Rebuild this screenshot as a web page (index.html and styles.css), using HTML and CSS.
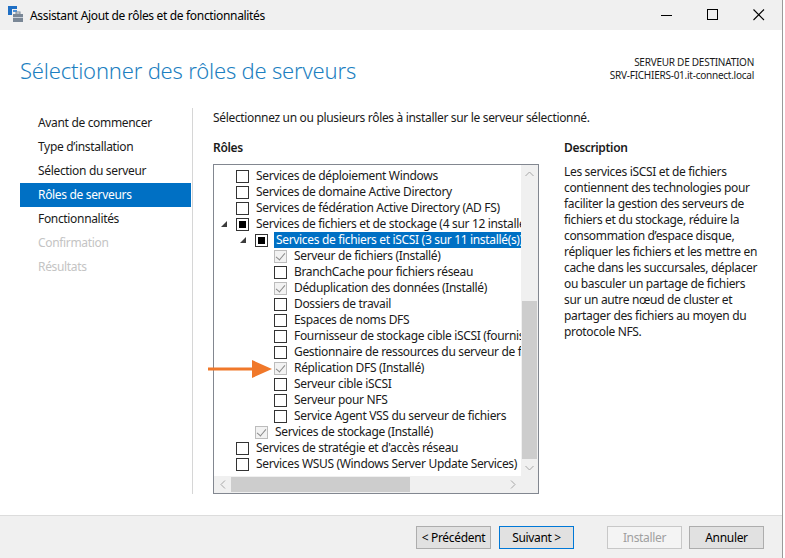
FILE: index.html
```html
<!DOCTYPE html>
<html lang="fr">
<head>
  <meta charset="UTF-8" />
  <title>Assistant Ajout de rôles et de fonctionnalités</title>
  <link rel="stylesheet" href="styles.css">
</head>
<body>
  <div class="window">

    <!-- Title bar -->
    <div class="titlebar">
      <svg class="app-icon" width="16" height="16" viewBox="0 0 16 16">
        <rect x="0" y="0" width="4" height="9" fill="#1f6fc4"/>
        <rect x="0" y="0" width="9" height="3" fill="#1f6fc4"/>
        <rect x="5" y="4" width="4" height="2" fill="#4a90d9"/>
        <rect x="5" y="8" width="10" height="8" fill="#7a8796"/>
        <rect x="8" y="6" width="4" height="2" fill="none" stroke="#7a8796" stroke-width="1"/>
        <rect x="5" y="11" width="10" height="1" fill="#c9d1da"/>
      </svg>
      <span class="title">Assistant Ajout de rôles et de fonctionnalités</span>
      <div class="controls">
        <span class="ctl"><svg width="12" height="12" viewBox="0 0 12 12"><line x1="0" y1="6.5" x2="11" y2="6.5" stroke="#000" stroke-width="1"/></svg></span>
        <span class="ctl"><svg width="12" height="12" viewBox="0 0 12 12"><rect x="0.5" y="0.5" width="10" height="10" fill="none" stroke="#000" stroke-width="1"/></svg></span>
        <span class="ctl"><svg width="12" height="12" viewBox="0 0 12 12"><path d="M0.5 0.5 L11 11 M11 0.5 L0.5 11" stroke="#000" stroke-width="1.1"/></svg></span>
      </div>
    </div>

    <!-- Header -->
    <div class="header">
      <h1>Sélectionner des rôles de serveurs</h1>
      <div class="dest">
        <div>SERVEUR DE DESTINATION</div>
        <div>SRV-FICHIERS-01.it-connect.local</div>
      </div>
    </div>

    <!-- Content -->
    <div class="content">
      <nav class="steps">
        <div class="step">Avant de commencer</div>
        <div class="step">Type d’installation</div>
        <div class="step">Sélection du serveur</div>
        <div class="step active">Rôles de serveurs</div>
        <div class="step">Fonctionnalités</div>
        <div class="step off">Confirmation</div>
        <div class="step off">Résultats</div>
      </nav>

      <main class="page">
        <p class="intro">Sélectionnez un ou plusieurs rôles à installer sur le serveur sélectionné.</p>
        <div class="columns">
          <section class="roles">
            <h2>Rôles</h2>
            <div class="tree">
              <div class="tree-rows">
                <div class="row"><span class="exp"></span><span class="box"></span><span class="label">Services de déploiement Windows</span></div>
                <div class="row"><span class="exp"></span><span class="box"></span><span class="label">Services de domaine Active Directory</span></div>
                <div class="row"><span class="exp"></span><span class="box"></span><span class="label">Services de fédération Active Directory (AD FS)</span></div>
                <div class="row"><span class="exp open"></span><span class="box partial"></span><span class="label">Services de fichiers et de stockage (4 sur 12 installé(s))</span></div>
                <div class="row lv1"><span class="exp open"></span><span class="box partial"></span><span class="label selected">Services de fichiers et iSCSI (3 sur 11 installé(s))</span></div>
                <div class="row lv2"><span class="exp"></span><span class="box done"></span><span class="label">Serveur de fichiers (Installé)</span></div>
                <div class="row lv2"><span class="exp"></span><span class="box"></span><span class="label">BranchCache pour fichiers réseau</span></div>
                <div class="row lv2"><span class="exp"></span><span class="box done"></span><span class="label">Déduplication des données (Installé)</span></div>
                <div class="row lv2"><span class="exp"></span><span class="box"></span><span class="label">Dossiers de travail</span></div>
                <div class="row lv2"><span class="exp"></span><span class="box"></span><span class="label">Espaces de noms DFS</span></div>
                <div class="row lv2"><span class="exp"></span><span class="box"></span><span class="label">Fournisseur de stockage cible iSCSI (fournisseurs de matériel VDS et VSS)</span></div>
                <div class="row lv2"><span class="exp"></span><span class="box"></span><span class="label">Gestionnaire de ressources du serveur de fichiers</span></div>
                <div class="row lv2"><span class="exp"></span><span class="box done"></span><span class="label">Réplication DFS (Installé)</span></div>
                <div class="row lv2"><span class="exp"></span><span class="box"></span><span class="label">Serveur cible iSCSI</span></div>
                <div class="row lv2"><span class="exp"></span><span class="box"></span><span class="label">Serveur pour NFS</span></div>
                <div class="row lv2"><span class="exp"></span><span class="box"></span><span class="label">Service Agent VSS du serveur de fichiers</span></div>
                <div class="row lv1"><span class="exp"></span><span class="box done"></span><span class="label">Services de stockage (Installé)</span></div>
                <div class="row"><span class="exp"></span><span class="box"></span><span class="label">Services de stratégie et d'accès réseau</span></div>
                <div class="row"><span class="exp"></span><span class="box"></span><span class="label">Services WSUS (Windows Server Update Services)</span></div>
              </div>

              <div class="vscroll">
                <span class="arrow"><svg width="9" height="6" viewBox="0 0 9 6"><path d="M0.5 5 L4.5 1 L8.5 5" fill="none" stroke="#a6a6a6" stroke-width="1"/></svg></span>
                <span class="spacer"></span>
                <span class="thumb"></span>
                <span class="arrow"><svg width="9" height="6" viewBox="0 0 9 6"><path d="M0.5 1 L4.5 5 L8.5 1" fill="none" stroke="#a6a6a6" stroke-width="1"/></svg></span>
              </div>

              <div class="hscroll">
                <span class="arrow"><svg width="6" height="9" viewBox="0 0 6 9"><path d="M5 0.5 L1 4.5 L5 8.5" fill="none" stroke="#a6a6a6" stroke-width="1"/></svg></span>
                <span class="thumb"></span>
                <span class="spacer"></span>
                <span class="arrow"><svg width="6" height="9" viewBox="0 0 6 9"><path d="M1 0.5 L5 4.5 L1 8.5" fill="none" stroke="#a6a6a6" stroke-width="1"/></svg></span>
              </div>
              <div class="corner"></div>
            </div>

            <!-- Orange pointer -->
            <svg class="pointer" width="66" height="20" viewBox="0 0 66 20">
              <line x1="0" y1="10" x2="48" y2="10" stroke="#f0782a" stroke-width="3"/>
              <polygon points="44,1 64,10 44,19" fill="#f0782a"/>
            </svg>
          </section>

          <section class="desc">
            <h2>Description</h2>
            <p>Les services iSCSI et de fichiers<br>
              contiennent des technologies pour<br>
              faciliter la gestion des serveurs de<br>
              fichiers et du stockage, réduire la<br>
              consommation d’espace disque,<br>
              répliquer les fichiers et les mettre en<br>
              cache dans les succursales, déplacer<br>
              ou basculer un partage de fichiers<br>
              sur un autre nœud de cluster et<br>
              partager des fichiers au moyen du<br>
              protocole NFS.</p>
          </section>
        </div>
      </main>
    </div>

    <!-- Footer buttons -->
    <div class="footer">
      <button class="btn">&lt; Précédent</button>
      <button class="btn default">Suivant &gt;</button>
      <button class="btn disabled">Installer</button>
      <button class="btn">Annuler</button>
    </div>
  </div>
</body>
</html>
```

FILE: styles.css
```css
* {
  box-sizing: border-box;
}

body {
  margin: 0;
  background: #fff;
  font-family: "Segoe UI", "Noto Sans", sans-serif;
  font-size: 12px;
  letter-spacing: -0.33px;
  color: #1a1a1a;
}

.window {
  width: 783px;
  height: 558px;
  border-right: 1px solid #9a9a9a;
  display: flex;
  flex-direction: column;
  background: #fff;
}

/* Title bar */
.titlebar {
  height: 30px;
  background: #f0f0f0;
  display: flex;
  align-items: center;
  padding-left: 8px;
}

.app-icon {
  margin-top: -2px;
}

.title {
  margin-left: 6px;
  color: #000;
}

.controls {
  margin-left: auto;
  display: flex;
}

.ctl {
  width: 46px;
  height: 30px;
  display: flex;
  align-items: center;
  justify-content: center;
}

/* Header */
.header {
  height: 78px;
  display: flex;
  justify-content: space-between;
  padding: 0 28px 0 20px;
}

.header h1 {
  margin: 25px 0 0;
  font-weight: 300;
  font-size: 22px;
  letter-spacing: -0.2px;
  color: #1d7fc1;
}

.dest {
  margin-top: 26px;
  text-align: right;
  font-size: 10px;
  letter-spacing: -0.25px;
  line-height: 13px;
  color: #1a1a1a;
}

/* Content */
.content {
  flex: 1;
  display: flex;
  padding-bottom: 21px;
}

.steps {
  width: 193px;
  padding: 3px 1px 0 20px;
  border-right: 1px solid #d6d6d6;
}

.step {
  height: 24px;
  line-height: 24px;
  padding-left: 18px;
  color: #1a1a1a;
}

.step.active {
  background: #0070c4;
  color: #fff;
}

.step.off {
  color: #c4c4c4;
}

.page {
  flex: 1;
  padding-left: 20px;
  display: flex;
  flex-direction: column;
}

.intro {
  margin: 2px 0 0;
  line-height: 16px;
}

.columns {
  flex: 1;
  display: flex;
  gap: 25px;
  margin-top: 14px;
}

h2 {
  margin: 0 0 8px;
  font-size: 12px;
  font-weight: 600;
  line-height: 16px;
}

.roles {
  width: 326px;
  display: flex;
  flex-direction: column;
  position: relative;
}

/* Tree */
.tree {
  flex: 1;
  border: 1px solid #828790;
  display: grid;
  grid-template-columns: 1fr 17px;
  grid-template-rows: 1fr 17px;
  overflow: hidden;
}

.tree-rows {
  padding-top: 3px;
  overflow: hidden;
  white-space: nowrap;
}

.row {
  height: 16px;
  display: flex;
  align-items: center;
  padding-left: 3px;
}

.row.lv1 {
  padding-left: 22px;
}

.row.lv2 {
  padding-left: 41px;
}

.exp {
  width: 19px;
  flex: none;
  height: 16px;
  position: relative;
}

.exp.open::after {
  content: "";
  position: absolute;
  left: 4px;
  top: 5px;
  border-style: solid;
  border-width: 0 0 6px 6px;
  border-color: transparent transparent #3c3c3c transparent;
}

.box {
  width: 13px;
  height: 13px;
  flex: none;
  border: 1px solid #333;
  background: #fff;
  position: relative;
}

.box.partial::after {
  content: "";
  position: absolute;
  left: 2px;
  top: 2px;
  width: 7px;
  height: 7px;
  background: #000;
}

.box.done {
  border-color: #bcbcbc;
  background: #f2f2f2;
}

.box.done::after {
  content: "";
  position: absolute;
  left: 3px;
  top: 0px;
  width: 4px;
  height: 8px;
  border: solid #8a8a8a;
  border-width: 0 1.5px 1.5px 0;
  transform: rotate(40deg);
}

.label {
  margin-left: 7px;
  line-height: 16px;
}

.label.selected {
  margin-left: 6px;
  padding: 0 2px;
  background: #0070c4;
  color: #fff;
}

/* Scrollbars */
.vscroll,
.hscroll,
.corner {
  background: #f0f0f0;
}

.vscroll {
  display: flex;
  flex-direction: column;
}

.hscroll {
  display: flex;
}

.arrow {
  width: 17px;
  height: 17px;
  flex: none;
  display: flex;
  align-items: center;
  justify-content: center;
}

.spacer {
  flex: 1;
}

.vscroll .thumb {
  height: 158px;
  background: #cdcdcd;
  margin: 0 1px;
}

.hscroll .thumb {
  width: 179px;
  background: #cdcdcd;
  margin: 1px 0;
}

.pointer {
  position: absolute;
  left: -5px;
  top: 219px;
}

/* Description */
.desc {
  flex: 1;
}

.desc p {
  margin: 3px 0 0;
  line-height: 16px;
}

/* Footer */
.footer {
  height: 43px;
  background: #f0f0f0;
  border-top: 1px solid #dcdcdc;
  display: flex;
  align-items: flex-start;
  padding: 10px 18px 0 0;
  justify-content: flex-end;
  gap: 8px;
}

.btn {
  width: 75px;
  height: 23px;
  font-family: inherit;
  font-size: 12px;
  letter-spacing: -0.33px;
  background: #e1e1e1;
  border: 1px solid #adadad;
  color: #000;
  padding: 0;
}

.btn.default {
  border-color: #0078d7;
  margin-right: 25px;
}

.btn.disabled {
  background: #f4f4f4;
  border-color: #c8c8c8;
  color: #a0a0a0;
  margin-right: -1px;
}
```
